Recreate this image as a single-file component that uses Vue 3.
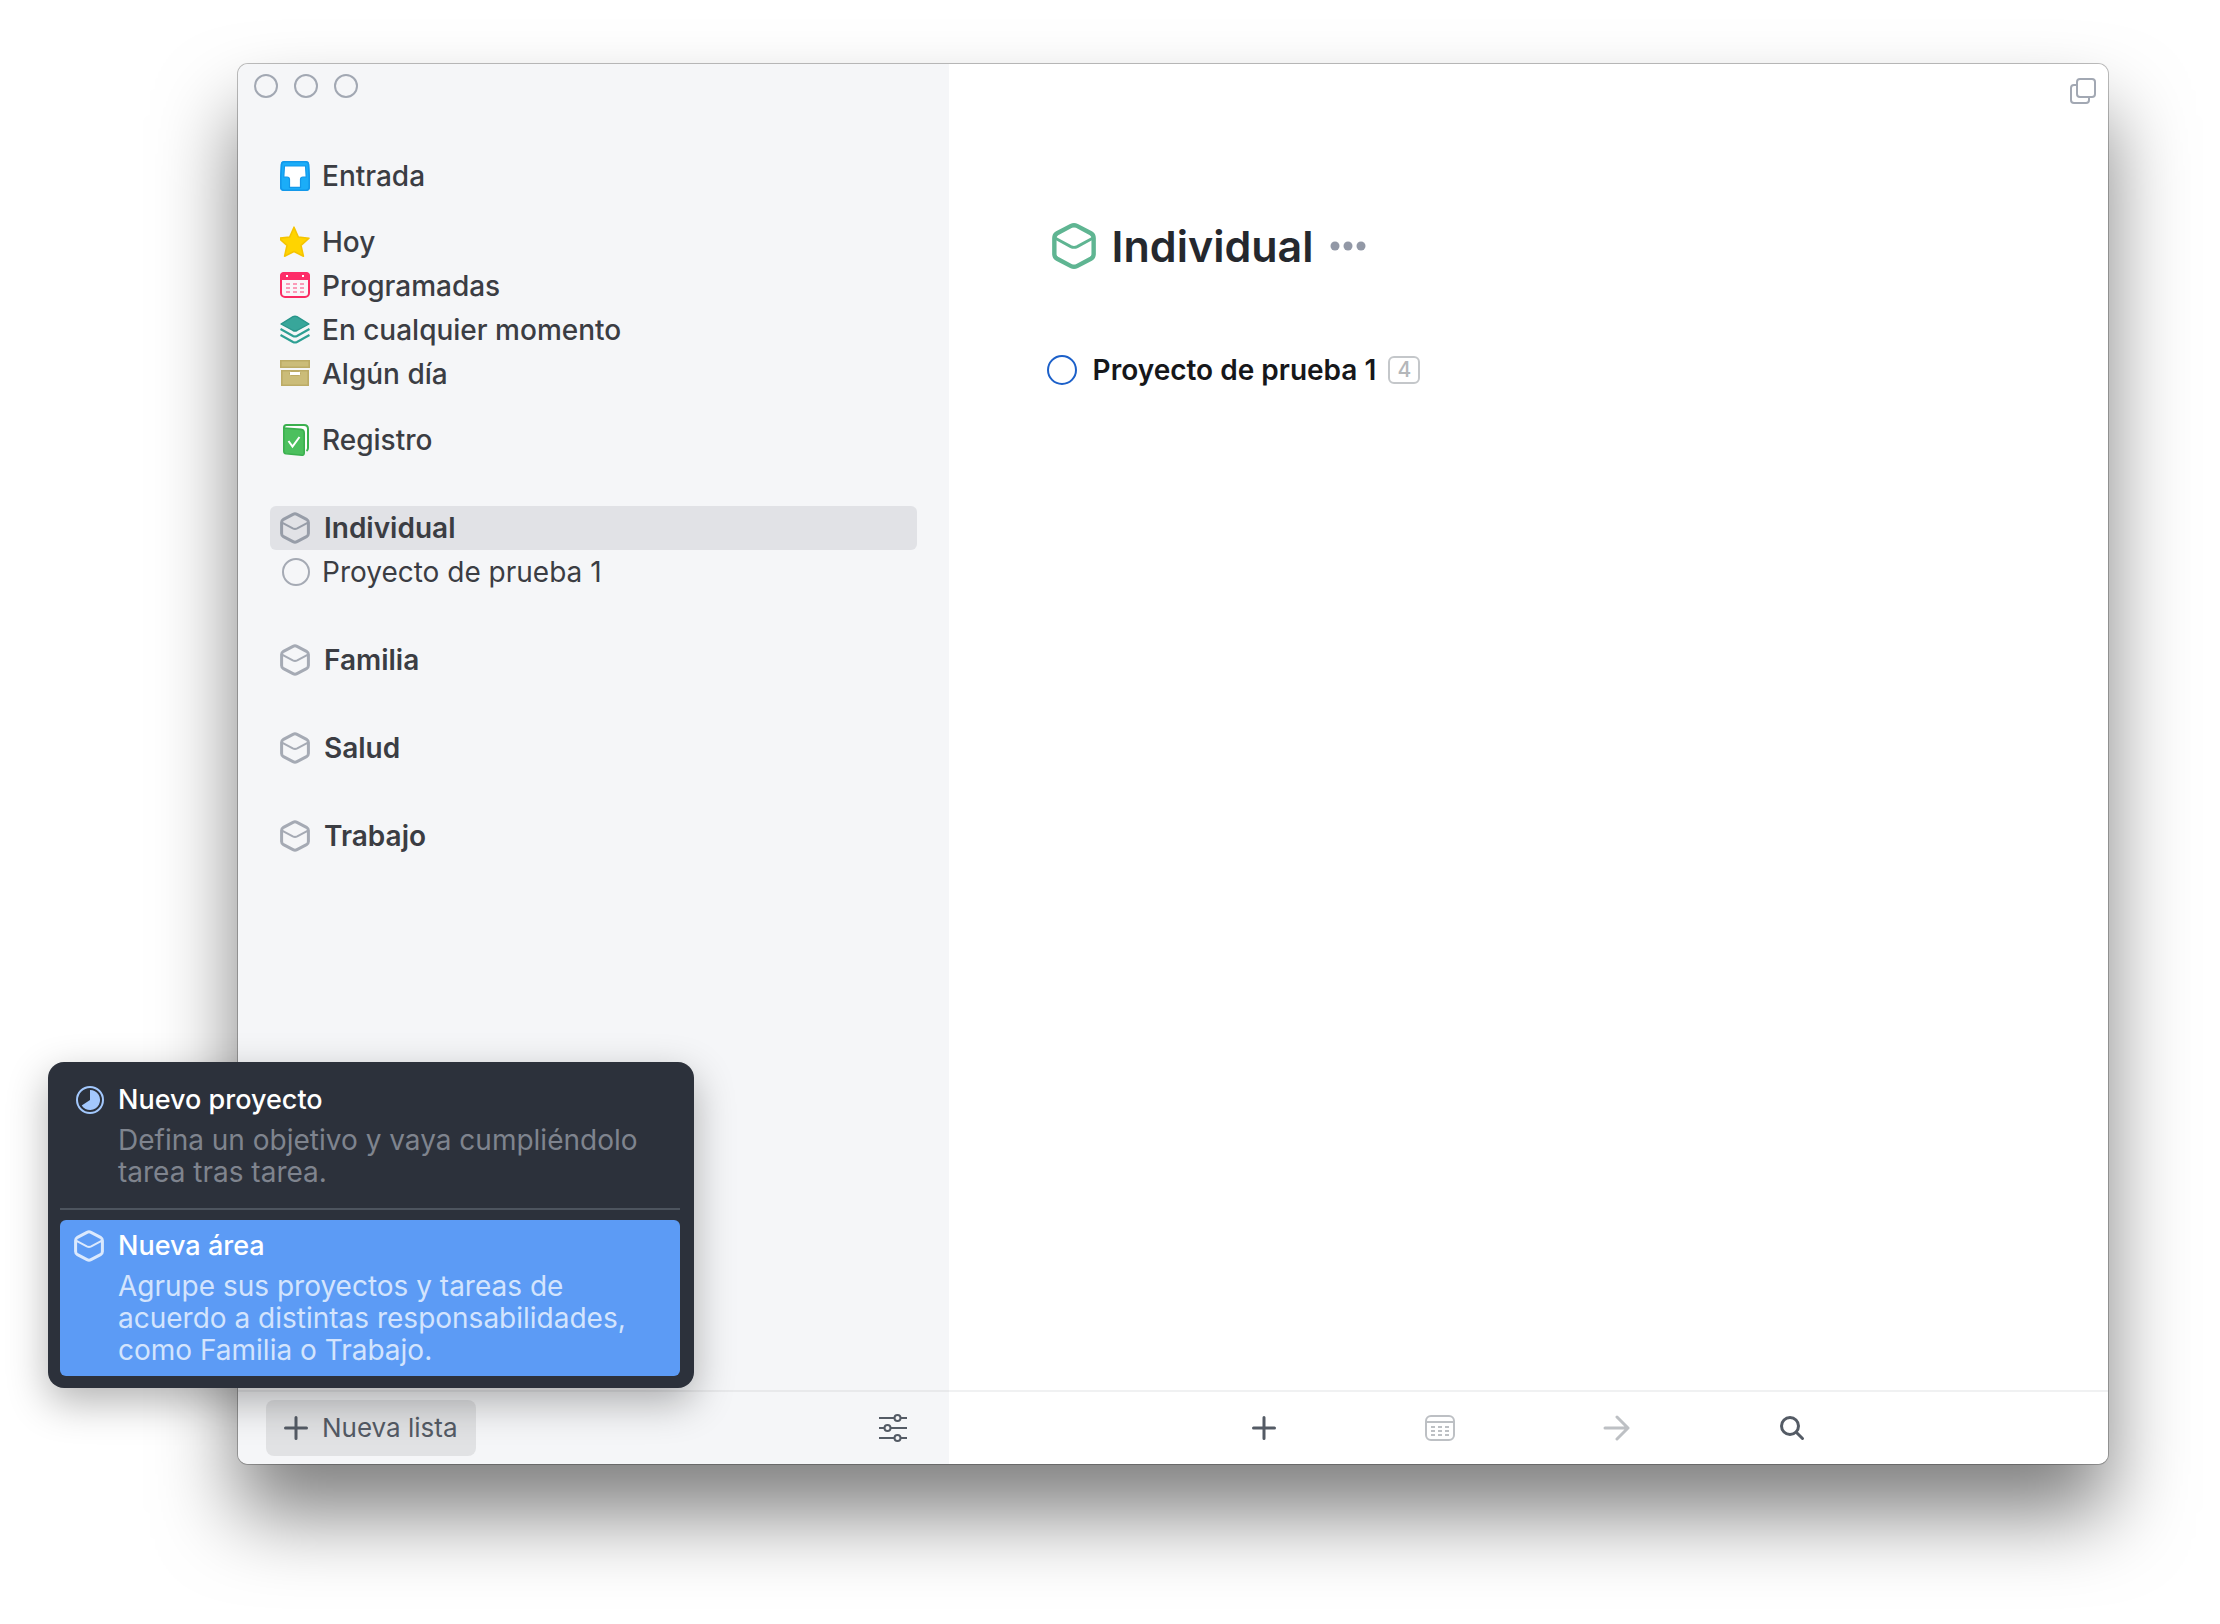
<script setup>
import { ref } from 'vue'

const listGroups = [
  [{ id: 'inbox', label: 'Entrada' }],
  [
    { id: 'today', label: 'Hoy' },
    { id: 'upcoming', label: 'Programadas' },
    { id: 'anytime', label: 'En cualquier momento' },
    { id: 'someday', label: 'Algún día' },
  ],
  [{ id: 'logbook', label: 'Registro' }],
]

const areas = [
  { name: 'Individual', projects: ['Proyecto de prueba 1'] },
  { name: 'Familia', projects: [] },
  { name: 'Salud', projects: [] },
  { name: 'Trabajo', projects: [] },
]

const selected = ref('Individual')
const done = ref(false)
</script>

<template>
  <!-- Shared icon shapes -->
  <svg class="defs" aria-hidden="true">
    <symbol id="area" viewBox="0 0 30 32">
      <path d="M13 2.3Q15 1.3 17 2.3L26.5 7.3Q28.4 8.4 28.4 10.6V21.4Q28.4 23.6 26.5 24.7L17 29.7Q15 30.7 13 29.7L3.5 24.7Q1.6 23.6 1.6 21.4V10.6Q1.6 8.4 3.5 7.3Z" />
      <path class="fold" d="M2 10.6L12.8 16.4Q15 17.5 17.2 16.4L28 10.6" />
    </symbol>
    <symbol id="plus" viewBox="0 0 24 24">
      <path d="M12 1.5V22.5M1.5 12H22.5" />
    </symbol>
    <symbol id="inbox" viewBox="0 0 30 32">
      <path fill="#1badf8" fill-rule="evenodd" stroke="none" d="M4.5 1H25.5Q29 1 29.2 4.5L30 17V27Q30 31 26 31H4Q0 31 0 27V17L.8 4.5Q1 1 4.5 1ZM5 6.5L4.3 16.5H7Q10 16.5 10 19.5V27H20V19.5Q20 16.5 23 16.5H25.7L25 6.5Z" />
      <path fill="none" stroke="#1398ea" stroke-width="1.6" d="M4.5 1.8H25.5Q28.4 1.8 28.5 4.5L29.2 17V27Q29.2 30.2 26 30.2H4Q.8 30.2 .8 27V17L1.5 4.5Q1.6 1.8 4.5 1.8Z" />
      <path fill="#fff" stroke="#1398ea" stroke-width="1.2" d="M4.5 6H25.5L26.2 17H23Q20.5 17 20.5 19.5V27.3H9.500V19.5Q9.5 17 7 17H3.8Z" />
    </symbol>
    <symbol id="today" viewBox="0 0 30 32">
      <path fill="#ffd400" stroke="#f5c400" stroke-width="1.6" stroke-linejoin="round" d="M14 1.2L18.3 11L29 12.2L21 19.3L23.4 30.2L14 25.5L4.6 30.2L7 19.3L-1 12.2L9.7 11Z" />
    </symbol>
    <symbol id="upcoming" viewBox="0 0 30 32">
      <rect x="1" y="3" width="28" height="24" rx="4" fill="#f9f6f9" stroke="#fa2b62" stroke-width="2" />
      <path fill="#fd2d68" d="M0 10V6Q0 2 4 2H26Q30 2 30 6V10Z" />
      <path fill="#fff" d="M6 5h2v2H6zM22 5h2v2h-2z" />
      <path stroke="#fb9ab8" stroke-width="2" stroke-dasharray="4 3" d="M6 14H24M6 18H24M6 22H24" />
    </symbol>
    <symbol id="anytime" viewBox="0 0 30 32">
      <path fill="#38a69a" stroke="#27958a" stroke-width="1.4" stroke-linejoin="round" d="M1 10L13 2.7Q15 1.7 17 2.7L29 10L17 16.5Q15 17.5 13 16.5Z" />
      <path fill="none" stroke="#2d9f93" stroke-width="2.2" d="M.5 15L13 22Q15 23 17 22L29.5 15M.5 21L13 28Q15 29 17 28L29.5 21" />
    </symbol>
    <symbol id="someday" viewBox="0 0 30 32">
      <path fill="#cbbc79" stroke="#bcab66" stroke-width="1.6" d="M.8 2.8H29.2V9.2H.8Z" />
      <path fill="#cbbc79" stroke="#bcab66" stroke-width="1.6" d="M1.8 12.8H28.2V27.2H1.8Z" />
      <rect x="9.5" y="13.5" width="11" height="4" rx="1" fill="#fff" stroke="#bcab66" />
    </symbol>
    <symbol id="logbook" viewBox="0 0 30 32">
      <path fill="#fff" stroke="#3bb04f" stroke-width="2" stroke-linejoin="round" d="M4 5V3.5Q4 1 6.5 1H24Q28 1 28 5V24Q28 26 26.5 27" />
      <path fill="#4cc05e" stroke="#3bb04f" stroke-width="1.6" stroke-linejoin="round" d="M3.8 4L21 5.4Q24.2 5.8 24.2 9V29Q24.2 31.4 22 31.2L6 29.8Q3.8 29.5 3.8 27Z" />
      <path fill="none" stroke="#fff" stroke-width="2" d="M8.5 17L12.5 22.5L19.5 13" />
    </symbol>
  </svg>

  <div class="desktop">
    <div class="window">
      <aside class="sidebar">
        <div class="lights">
          <button type="button" aria-label="Cerrar"></button>
          <button type="button" aria-label="Minimizar"></button>
          <button type="button" aria-label="Ampliar"></button>
        </div>

        <nav class="lists">
          <ul v-for="(group, i) in listGroups" :key="i" class="group">
            <li v-for="item in group" :key="item.id">
              <a class="row" href="#">
                <svg class="icon"><use :href="'#' + item.id" /></svg>
                <span>{{ item.label }}</span>
              </a>
            </li>
          </ul>
        </nav>

        <nav class="areas">
          <ul v-for="area in areas" :key="area.name" class="group">
            <li>
              <a class="row area" :class="{ selected: area.name === selected }" href="#" @click.prevent="selected = area.name">
                <svg class="icon hex"><use href="#area" /></svg>
                <span>{{ area.name }}</span>
              </a>
            </li>
            <li v-for="project in area.projects" :key="project">
              <a class="row project" href="#">
                <svg class="icon ring" viewBox="0 0 30 32"><circle cx="16" cy="16" r="13" /></svg>
                <span>{{ project }}</span>
              </a>
            </li>
          </ul>
        </nav>

        <footer class="bar side-bar">
          <button type="button" class="new-list">
            <svg class="plus"><use href="#plus" /></svg>
            <span>Nueva lista</span>
          </button>
          <button type="button" class="settings" aria-label="Ajustes">
            <svg width="28" height="30" viewBox="0 0 28 30">
              <path d="M0 5H15M22 5H28M0 15H5M12 15H28M0 25H15M22 25H28" />
              <circle cx="18.500" cy="5" r="3" />
              <circle cx="8.500" cy="15" r="3" />
              <circle cx="18.500" cy="25" r="3" />
            </svg>
          </button>

          <div class="popover">
            <button type="button" class="choice">
              <svg class="pie" viewBox="0 0 30 32">
                <circle cx="16" cy="16" r="13" />
                <path d="M16 6A10 10 0 1 1 7.7 21.5L16 16Z" />
              </svg>
              <span class="copy">
                <span class="heading">Nuevo proyecto</span>
                <span class="detail">Defina un objetivo y vaya cumpliéndolo tarea tras tarea.</span>
              </span>
            </button>
            <hr />
            <button type="button" class="choice active">
              <svg class="hex"><use href="#area" /></svg>
              <span class="copy">
                <span class="heading">Nueva área</span>
                <span class="detail">Agrupe sus proyectos y tareas de acuerdo a distintas responsabilidades, como Familia o Trabajo.</span>
              </span>
            </button>
          </div>
        </footer>
      </aside>

      <main class="content">
        <header class="top">
          <button type="button" aria-label="Nueva ventana">
            <svg width="28" height="28" viewBox="0 0 28 28">
              <path d="M7 8H5Q2 8 2 11V23Q2 26 5 26H17Q20 26 20 23V21" />
              <rect x="8" y="2" width="18" height="18" rx="3" />
            </svg>
          </button>
        </header>

        <section class="page">
          <div class="title">
            <svg class="title-icon"><use href="#area" /></svg>
            <h1>Individual</h1>
            <button type="button" aria-label="Más">
              <svg width="36" height="10" viewBox="0 0 36 10">
                <circle cx="5" cy="5" r="4.5" />
                <circle cx="18" cy="5" r="4.5" />
                <circle cx="31" cy="5" r="4.5" />
              </svg>
            </button>
          </div>
          <div class="task">
            <input id="task" v-model="done" type="checkbox" />
            <label for="task">Proyecto de prueba 1</label>
            <span class="count">4</span>
          </div>
        </section>

        <footer class="bar main-bar">
          <button type="button" aria-label="Nueva tarea">
            <svg class="plus"><use href="#plus" /></svg>
          </button>
          <button type="button" class="off" aria-label="Programar">
            <svg width="30" height="28" viewBox="0 0 30 28">
              <rect x="1" y="2" width="28" height="24" rx="5" />
              <path d="M1 8H29" />
              <path stroke-dasharray="4 3" d="M6 13H24M6 17H24M6 21H24" />
            </svg>
          </button>
          <button type="button" class="off" aria-label="Mover">
            <svg class="bold" width="28" height="28" viewBox="0 0 28 28">
              <path d="M3 14H26M15 3L26 14L15 25" />
            </svg>
          </button>
          <button type="button" aria-label="Buscar">
            <svg class="bold" width="28" height="28" viewBox="0 0 28 28">
              <circle cx="12" cy="12" r="8.5" />
              <path d="M18.500 18.500L24.500 24.500" />
            </svg>
          </button>
        </footer>
      </main>
    </div>
  </div>
</template>

<style>
body {
  background: #fff;
}
</style>

<style scoped>
* {
  box-sizing: border-box;
}

.defs {
  position: absolute;
  width: 0;
  height: 0;
}

button {
  display: flex;
  align-items: center;
  justify-content: center;
  margin: 0;
  padding: 0;
  border: 0;
  background: none;
  color: inherit;
  font: inherit;
  text-align: left;
}

svg {
  flex: none;
}

.desktop {
  display: flex;
  min-height: 100vh;
  padding: 64px 112px 160px 238px;
  overflow: hidden;
  font-family: Inter, "Liberation Sans", sans-serif;
  font-size: 28px;
  line-height: 32px;
  color: #3b3d43;
}

.window {
  display: flex;
  flex: 1;
  border-radius: 10px;
  box-shadow: 0 0 0 1px rgba(0, 0, 0, 0.25), 0 50px 80px rgba(0, 0, 0, 0.5);
}

.sidebar {
  display: flex;
  flex-direction: column;
  width: 38%;
  border-radius: 10px 0 0 10px;
  background: #f5f6f8;
}

.lights {
  display: flex;
  gap: 16px;
  padding: 10px 16px 56px;
}

.lights button {
  width: 24px;
  height: 24px;
  border: 2px solid #a2a8b3;
  border-radius: 50%;
}

ul {
  margin: 0;
  padding: 0;
  list-style: none;
}

.lists,
.areas {
  display: flex;
  flex-direction: column;
  padding: 0 32px;
}

.lists {
  gap: 22px;
  margin-bottom: 44px;
}

.areas {
  flex: 1;
  gap: 44px;
}

.row {
  display: flex;
  align-items: center;
  gap: 12px;
  height: 44px;
  padding: 0 10px;
  border-radius: 6px;
  color: inherit;
  font-weight: 500;
  text-decoration: none;
}

.row.area {
  gap: 14px;
  font-weight: 600;
}

.row.project {
  font-weight: 400;
}

.row.selected {
  background: #e1e2e6;
}

.icon {
  width: 30px;
  height: 32px;
  overflow: visible;
}

.hex,
.ring {
  fill: none;
  stroke: #a5aab4;
  stroke-width: 3px;
}

.ring {
  stroke-width: 2px;
}

.selected .hex {
  stroke: #979da8;
}

.fold {
  stroke-width: 2px;
}

.bar {
  display: flex;
  align-items: center;
  height: 74px;
  border-top: 2px solid #e8e9eb;
}

.side-bar {
  position: relative;
  justify-content: space-between;
  padding: 0 42px 0 28px;
  color: #545b65;
}

.new-list {
  gap: 14px;
  height: 56px;
  padding: 0 18px;
  border-radius: 8px;
  background: #e1e2e4;
  font-size: 26px;
}

.plus {
  width: 24px;
  height: 24px;
  fill: none;
  stroke: #545b65;
  stroke-width: 3px;
  stroke-linecap: round;
}

.settings svg {
  fill: none;
  stroke: #545b65;
  stroke-width: 2px;
}

.popover {
  position: absolute;
  bottom: 100%;
  left: -190px;
  width: 646px;
  margin-bottom: 4px;
  padding: 12px 14px 12px 12px;
  border-radius: 16px;
  background: #2c313b;
  box-shadow: 0 14px 40px rgba(0, 0, 0, 0.3);
}

.choice {
  align-items: flex-start;
  justify-content: flex-start;
  gap: 14px;
  width: 100%;
  padding: 10px 24px 10px 14px;
  border-radius: 6px;
}

.choice svg {
  width: 30px;
  height: 32px;
}

.choice .hex {
  stroke: #dbe9fd;
}

.pie circle {
  fill: none;
  stroke: #a3c8fd;
  stroke-width: 2px;
}

.pie path {
  fill: #a3c8fd;
}

.copy {
  display: flex;
  flex-direction: column;
  gap: 8px;
}

.heading {
  color: #fff;
  font-size: 27px;
  font-weight: 500;
}

.detail {
  color: #7f848e;
}

.choice.active {
  background: #5c9bf5;
}

.active .detail {
  color: #d3e4fd;
}

hr {
  height: 2px;
  margin: 10px 0;
  border: 0;
  background: #4d545e;
}

.content {
  display: flex;
  flex: 1;
  flex-direction: column;
  border-radius: 0 10px 10px 0;
  background: #fff;
}

.top {
  display: flex;
  justify-content: flex-end;
  padding: 13px 11px;
}

.top svg {
  fill: none;
  stroke: #a2a8b3;
  stroke-width: 2px;
}

.page {
  flex: 1;
  padding: 100px 98px 0;
}

.title {
  display: flex;
  align-items: center;
  gap: 16px;
  margin-left: 5px;
}

.title-icon {
  width: 44px;
  height: 48px;
  fill: none;
  stroke: #5fb592;
  stroke-width: 3px;
}

h1 {
  margin: 0;
  color: #25282e;
  font-size: 43px;
  font-weight: 600;
  line-height: 56px;
}

.title button svg {
  fill: #9298a6;
}

.task {
  display: flex;
  align-items: center;
  gap: 12px;
  margin-top: 80px;
  color: #16171a;
  font-weight: 600;
}

.task input {
  width: 30px;
  height: 30px;
  margin: 0 4px 0 0;
  border: 2px solid #1c60c9;
  border-radius: 50%;
  appearance: none;
}

.task input:checked {
  background: #1c60c9;
}

.count {
  width: 32px;
  height: 28px;
  border: 2px solid #c4c7ca;
  border-radius: 6px;
  color: #b4b7ba;
  font-size: 21px;
  font-weight: 500;
  line-height: 24px;
  text-align: center;
}

.main-bar {
  justify-content: center;
  gap: 120px;
  border-color: #f0f1f2;
}

.main-bar button {
  width: 56px;
  height: 56px;
}

.main-bar svg {
  fill: none;
  stroke: #545b65;
  stroke-width: 2px;
  stroke-linecap: round;
}

.main-bar .plus,
.main-bar .bold {
  stroke-width: 3px;
}

.main-bar .off svg {
  stroke: #bdc0c4;
  stroke-linecap: butt;
}

.main-bar .off .bold {
  stroke-linecap: round;
  stroke-linejoin: round;
}
</style>
